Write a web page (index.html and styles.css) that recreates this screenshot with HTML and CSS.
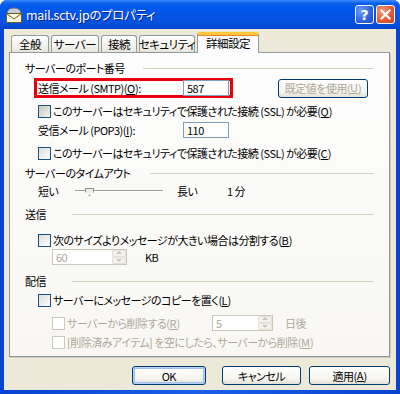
FILE: index.html
```html
<!DOCTYPE html>
<html lang="ja">
<head>
    <meta charset="UTF-8">
    <title>mail.sctv.jpのプロパティ</title>
    <link rel="stylesheet" href="styles.css">
</head>
<body>
    <div class="window">
        <div class="titlebar">
            <svg class="app-icon" width="18" height="16" viewBox="0 0 18 16">
                <path d="M2 7 Q2 1 9 1 Q16 1 16 7 Z" fill="#c8ccd4" stroke="#6b7280" stroke-width="1"/>
                <rect x="1.5" y="6.5" width="15" height="9" fill="#fdf7dc" stroke="#6b5a2a"/>
                <path d="M1.5 6.5 L9 12 L16.5 6.5" fill="none" stroke="#6b5a2a"/>
            </svg>
            <span class="title">mail.sctv.jpのプロパティ</span>
            <div class="caption-buttons">
                <span class="cap-btn cap-help">?</span>
                <span class="cap-btn cap-close">
                    <svg width="11" height="11" viewBox="0 0 11 11"><path d="M1.5 1.5 L9.5 9.5 M9.5 1.5 L1.5 9.5" stroke="#fff" stroke-width="2.2" stroke-linecap="square"/></svg>
                </span>
            </div>
        </div>

        <div class="client">
            <div class="tabs">
                <span class="tab tab-general">全般</span>
                <span class="tab tab-server">サーバー</span>
                <span class="tab tab-conn">接続</span>
                <span class="tab tab-sec">セキュリティ</span>
                <span class="tab tab-active">詳細設定</span>
            </div>

            <div class="panel">
                <!-- サーバーのポート番号 -->
                <div class="group-head">
                    <span>サーバーのポート番号</span>
                    <span class="rule rule-port"></span>
                </div>
                <div class="row row-smtp">
                    <div class="highlight">
                        <span class="label">送信メール (SMTP)(<span class="key">O</span>):</span>
                        <span class="field field-port">587</span>
                    </div>
                    <span class="btn btn-default">既定値を使用(<span class="key">U</span>)</span>
                </div>
                <label class="row check row-cb1">
                    <span class="box box-hot"></span>
                    <span>このサーバーはセキュリティで保護された接続 (SSL) が必要(<span class="key">Q</span>)</span>
                </label>
                <div class="row row-pop">
                    <span class="label">受信メール (POP3)(<span class="key">I</span>):</span>
                    <span class="field field-pop">110</span>
                </div>
                <label class="row check row-cb2">
                    <span class="box"></span>
                    <span>このサーバーはセキュリティで保護された接続 (SSL) が必要(<span class="key">C</span>)</span>
                </label>

                <!-- サーバーのタイムアウト -->
                <div class="group-head head-timeout">
                    <span>サーバーのタイムアウト</span>
                    <span class="rule rule-timeout"></span>
                </div>
                <div class="row row-slider">
                    <span class="slider-short">短い</span>
                    <span class="track"><span class="thumb"></span></span>
                    <span class="slider-long">長い</span>
                    <span class="slider-value">1 分</span>
                </div>

                <!-- 送信 -->
                <div class="group-head head-send">
                    <span>送信</span>
                    <span class="rule rule-short"></span>
                </div>
                <label class="row check row-cb3">
                    <span class="box"></span>
                    <span>次のサイズよりメッセージが大きい場合は分割する(<span class="key">B</span>)</span>
                </label>
                <div class="row row-size">
                    <span class="spin spin-size">60<span class="spin-arrows"><i class="up"></i><i class="down"></i></span></span>
                    <span class="unit">KB</span>
                </div>

                <!-- 配信 -->
                <div class="group-head head-deliver">
                    <span>配信</span>
                    <span class="rule rule-short"></span>
                </div>
                <label class="row check row-cb4">
                    <span class="box"></span>
                    <span>サーバーにメッセージのコピーを置く(<span class="key">L</span>)</span>
                </label>
                <div class="row check sub disabled row-cb5">
                    <span class="box"></span>
                    <span class="remove-label">サーバーから削除する(<span class="key">R</span>)</span>
                    <span class="spin spin-days">5<span class="spin-arrows"><i class="up"></i><i class="down"></i></span></span>
                    <span class="unit">日後</span>
                </div>
                <div class="row check sub disabled row-cb6">
                    <span class="box"></span>
                    <span>[削除済みアイテム] を空にしたら、サーバーから削除(<span class="key">M</span>)</span>
                </div>
            </div>

            <div class="footer">
                <span class="btn btn-ok">OK</span>
                <span class="btn btn-cancel">キャンセル</span>
                <span class="btn btn-apply">適用(<span class="key">A</span>)</span>
            </div>
        </div>
    </div>
</body>
</html>
```

FILE: styles.css
```css
body {
    margin: 0;
    width: 400px;
    height: 394px;
    overflow: hidden;
    font-family: "Noto Sans CJK JP", "Noto Sans", sans-serif;
    font-size: 11px;
    letter-spacing: -0.5px;
    font-feature-settings: "palt";
    white-space: nowrap;
    color: #000;
}
.key {
    display: inline-block;
    line-height: 11px;
    border-bottom: 1px solid currentColor;
    letter-spacing: 0;
}
.window {
    width: 400px;
    height: 394px;
    box-sizing: border-box;
    border-radius: 7px 7px 0 0;
    display: flex;
    flex-direction: column;
    padding: 0 4px 4px;
    background: linear-gradient(90deg, #0842d0, #1a5ee8 50%, #0842d0);
}
.titlebar {
    height: 29px;
    margin: 0 -4px;
    padding: 0 4px 0 5px;
    display: flex;
    align-items: center;
    border-radius: 7px 7px 0 0;
    background: linear-gradient(180deg, #3a8cff 0%, #0a5fe8 12%, #0058ee 30%, #0554e4 60%, #0450d8 85%, #0340c8 100%);
}
.app-icon {
    margin-top: 1px;
}
.title {
    margin-left: 3px;
    color: #fff;
    font-size: 12.5px;
    letter-spacing: -0.3px;
    text-shadow: 1px 1px 0 #0a1f8a;
}
.caption-buttons {
    margin-left: auto;
    display: flex;
    gap: 2px;
    margin-right: 1px;
}
.cap-btn {
    width: 19px;
    height: 19px;
    box-sizing: border-box;
    border: 1px solid #fff;
    border-radius: 3px;
    display: flex;
    align-items: center;
    justify-content: center;
    color: #fff;
    font-family: "DejaVu Sans", sans-serif;
    font-weight: bold;
    font-size: 14px;
    letter-spacing: 0;
}
.cap-help {
    background: radial-gradient(circle at 30% 30%, #6d9cf6, #2a63e0 60%, #1f4fc4);
}
.cap-close {
    background: radial-gradient(circle at 30% 30%, #f09a7c, #e35b36 55%, #c7421f);
}
.client {
    flex: 1;
    background: #ece9d8;
    padding: 3px 6px 0 5px;
    display: flex;
    flex-direction: column;
}
.tabs {
    height: 20px;
    display: flex;
    align-items: flex-end;
    padding-left: 2px;
    gap: 2px;
    position: relative;
    z-index: 1;
}
.tab {
    height: 17px;
    box-sizing: border-box;
    border: 1px solid #919b9c;
    border-bottom: none;
    border-radius: 3px 3px 0 0;
    background: linear-gradient(180deg, #fff, #f3f2ec 60%, #e6e5dd);
    display: flex;
    align-items: center;
    justify-content: center;
    font-size: 11.5px;
}
.tab-general { width: 38px; }
.tab-server { width: 48px; }
.tab-conn { width: 36px; }
.tab-sec { width: 56px; }
.tab-active {
    width: 62px;
    height: 21px;
    margin-bottom: -1px;
    background: #fcfcfe;
    border-top: 3px solid #ffc83c;
    box-shadow: inset 0 1px 0 #e68b2c;
    padding-bottom: 2px;
}
.panel {
    height: 305px;
    box-sizing: border-box;
    border: 1px solid #919b9c;
    border-right-color: #8c9596;
    border-bottom-color: #8c9596;
    background: linear-gradient(180deg, #fdfdfd, #f8f7f3);
    padding: 8px 15px 0 15px;
    box-shadow: 1px 1px 0 #d0cec1;
}
.group-head {
    height: 14px;
    display: flex;
    align-items: center;
}
.rule {
    flex: 1;
    height: 0;
    border-top: 1px solid #d0d0bf;
}
.rule-port { margin-left: 18px; }
.rule-timeout { margin-left: 20px; }
.rule-short { margin-left: 26px; }
.row {
    display: flex;
    align-items: center;
    padding-left: 13px;
}
.check {
    height: 14px;
    gap: 2px;
}
.sub {
    padding-left: 27px;
}
.box {
    width: 11px;
    height: 11px;
    border: 1px solid #1c5180;
    background: linear-gradient(135deg, #dcdcd6, #fff);
    flex: none;
}
.box-hot {
    background: linear-gradient(135deg, #c8c8bf, #f4f4f0);
}
.disabled {
    color: #aca899;
}
.disabled .box {
    border-color: #cac8bb;
    background: #fff;
}
.label {
    width: 149px;
}
.field {
    height: 16px;
    box-sizing: border-box;
    border: 1px solid #7f9db9;
    background: #fff;
    display: flex;
    align-items: center;
    padding-left: 3px;
}
.row-smtp {
    margin-top: 3px;
    height: 20px;
    padding-left: 9px;
}
.highlight {
    height: 20px;
    width: 199px;
    box-sizing: border-box;
    border: 3px solid #e8000c;
    display: flex;
    align-items: center;
    padding-left: 1px;
}
.highlight .label {
    width: 145px;
}
.field-port { width: 46px; }
.field-pop { width: 46px; }
.btn-default {
    margin-left: 45px;
    width: 90px;
    height: 17px;
    color: #aca899;
    border-color: #c9c7ba;
}
.row-cb1 { margin-top: 6px; }
.row-pop {
    margin-top: 4px;
    height: 16px;
}
.row-pop .label { width: 145px; }
.row-cb2 { margin-top: 8px; }
.head-timeout { margin-top: 6px; }
.row-slider {
    margin-top: 4px;
    height: 14px;
}
.slider-short { width: 37px; }
.track {
    width: 88px;
    height: 0;
    border-top: 1px solid #9d9c99;
    border-bottom: 1px solid #fff;
    position: relative;
}
.thumb {
    position: absolute;
    left: 10px;
    top: -3px;
    width: 7px;
    height: 6px;
    background: #f0f0ea;
    border: 1px solid #8c8f8a;
    border-bottom-color: #21a121;
    clip-path: polygon(0 0, 100% 0, 100% 50%, 50% 100%, 0 50%);
}
.slider-long {
    margin-left: 14px;
    width: 50px;
}
.head-send { margin-top: 9px; }
.head-send .rule, .head-deliver .rule { margin-left: 26px; }
.row-cb3 { margin-top: 12px; }
.row-size {
    margin-top: 2px;
    height: 16px;
    padding-left: 27px;
}
.spin {
    height: 16px;
    box-sizing: border-box;
    border: 1px solid #c9c7ba;
    background: #fff;
    color: #aca899;
    display: flex;
    align-items: center;
    padding-left: 3px;
    position: relative;
}
.spin-size { width: 75px; }
.spin-days {
    width: 61px;
}
.spin-arrows {
    margin-left: auto;
    width: 14px;
    height: 14px;
    display: flex;
    flex-direction: column;
    background: #f3f2ec;
}
.spin-arrows i {
    flex: 1;
    border: 1px solid #e4e2d8;
    border-radius: 2px;
    position: relative;
}
.spin-arrows i::after {
    content: "";
    position: absolute;
    left: 3px;
    border: 3px solid transparent;
}
.spin-arrows .up::after {
    border-bottom-color: #c9c7ba;
    top: -3px;
}
.spin-arrows .down::after {
    border-top-color: #c9c7ba;
    top: 1px;
}
.unit {
    margin-left: 18px;
}
.disabled .unit {
    margin-left: 10px;
}
.head-deliver { margin-top: 9px; }
.row-cb4 { margin-top: 5px; }
.row-cb5 {
    margin-top: 8px;
    height: 16px;
}
.remove-label { width: 143px; }
.row-cb6 { margin-top: 4px; }
.footer {
    display: flex;
    padding: 9px 0 0 123px;
}
.btn {
    height: 19px;
    box-sizing: border-box;
    border: 1px solid #003c74;
    border-radius: 3px;
    background: linear-gradient(180deg, #fff, #f5f4ee 70%, #e3e1d6);
    display: flex;
    align-items: center;
    justify-content: center;
}
.btn-ok {
    width: 74px;
    box-shadow: inset 0 0 0 1px #b9d1f7, inset 0 0 0 2px #9fbdef;
}
.btn-cancel {
    width: 80px;
    margin-left: 16px;
}
.btn-apply {
    width: 81px;
    margin-left: 8px;
}
```
